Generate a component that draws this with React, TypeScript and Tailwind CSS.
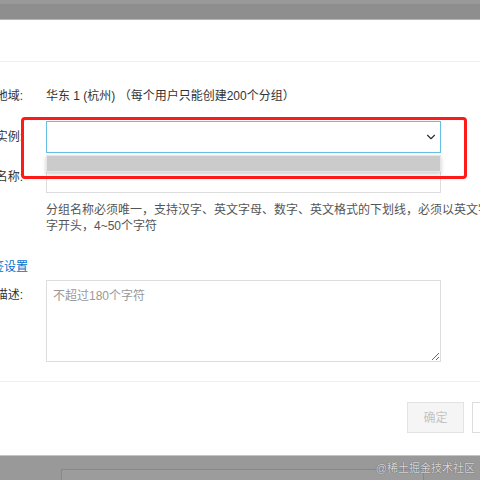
import { ChevronDown } from "lucide-react";

const App = () => {
  return (
    <div className="relative w-[480px] h-[480px] overflow-hidden bg-white text-[12px] text-[#333333] font-['Liberation_Sans','Noto_Sans_CJK_SC',sans-serif]">
      {/* mask over the page above the dialog */}
      <div className="h-[4px] bg-[#999999]" />
      <div className="h-[15px] bg-[#8e8e8e]" />
      <div className="h-[1px] bg-[#b4b4b4]" />

      {/* dialog header */}
      <div className="h-[42px] border-b border-[#eeeeee]" />

      {/* dialog body */}
      <div className="-ml-[40px] pt-[24px]">
        <div className="flex h-[20px] items-center leading-[20px]">
          <div className="w-[64px] pr-[1px] text-right">地域:</div>
          <div className="ml-[22px] whitespace-nowrap">华东 1 (杭州) （每个用户只能创建200个分组）</div>
        </div>

        <div className="mt-[15px] flex items-center">
          <div className="w-[64px] pr-[1px] text-right leading-[20px]">实例:</div>
          <div className="ml-[22px] flex h-[32px] w-[395px] items-center justify-end border border-[#66bfe2] bg-white pr-[2px]">
            <ChevronDown size={14} strokeWidth={2} color="#333333" />
          </div>
        </div>

        <div className="mt-[8px] flex items-center">
          <div className="w-[64px] pr-[1px] text-right leading-[20px]">名称:</div>
          <div className="ml-[22px] h-[32px] w-[395px] border border-[#dddddd] bg-white" />
        </div>

        <div className="ml-[86px] mt-[9px] leading-[16px] text-[#555555]">
          <div className="whitespace-nowrap">分组名称必须唯一，支持汉字、英文字母、数字、英文格式的下划线，必须以英文字</div>
          <div className="whitespace-nowrap">字开头，4~50个字符</div>
        </div>

        <div className="mt-[23px] flex h-[20px] items-center leading-[20px]">
          <div className="w-[68px] whitespace-nowrap text-right text-[#0070cc]">标签设置</div>
        </div>

        <div className="mt-[3px] flex items-start">
          <div className="w-[64px] pr-[1px] pt-[5px] text-right leading-[20px]">描述:</div>
          <textarea
            readOnly
            placeholder="不超过180个字符"
            className="ml-[22px] h-[82px] w-[395px] border border-[#dddddd] px-[6px] pt-[6px] text-[12px] leading-[18px] text-[#333333] placeholder:text-[#999999] outline-none"
          />
        </div>
      </div>

      {/* dialog footer */}
      <div className="mt-[19px] flex h-[74px] items-start gap-[8px] border-t border-[#eeeeee] pl-[407px] pt-[20px]">
        <div className="flex h-[31px] w-[57px] shrink-0 items-center justify-center border border-[#e3e3e3] bg-[#f5f5f5] text-[#c4c4c4]">
          确定
        </div>
        <div className="h-[31px] w-[57px] shrink-0 border border-[#dddddd] bg-white" />
      </div>

      {/* mask over the page below the dialog */}
      <div className="h-[1px] bg-[#c4c4c4]" />
      <div className="flex h-[30px] items-start bg-[#999999] pt-[13px]">
        <div className="w-[61px] pl-[8px] pt-[9px] text-[12px] font-bold text-[#3d3d3d]">描述</div>
        <div className="h-[20px] w-[363px] border border-[#888888] bg-[#9c9c9c] pl-[18px] pt-[9px] text-[#555555]">
          不超过180个字符
        </div>
      </div>

      {/* dropdown list opening below the select */}
      <div className="absolute left-[46px] top-[155px] h-[17px] w-[395px] border border-[#e6e6e6] bg-[#cbcbcb] shadow-[0_2px_4px_rgba(0,0,0,0.2)]" />

      {/* red annotation box */}
      <div className="absolute left-[21px] top-[117px] h-[62px] w-[446px] rounded-[4px] border-[3px] border-[#ff1a1a]" />

      <div className="absolute bottom-[5px] right-[5px] text-[11px] leading-[13px] text-[#d8d8d8] [text-shadow:0_0_1px_#444444]">
        @稀土掘金技术社区
      </div>
    </div>
  );
};

export default App;
